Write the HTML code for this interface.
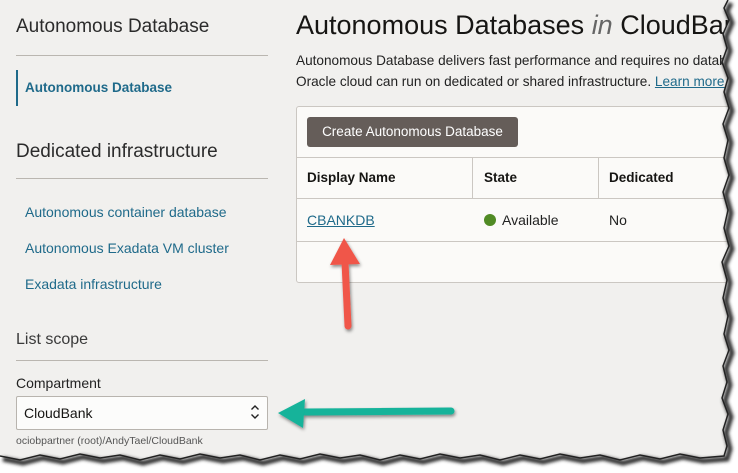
<!DOCTYPE html>
<html><head><meta charset="utf-8"><style>
*{margin:0;padding:0;box-sizing:border-box}
body{width:738px;height:473px;overflow:hidden;background:#fff;font-family:"Liberation Sans",sans-serif;position:relative}
#pg{position:absolute;left:0;top:0;width:738px;height:473px;background:#f1f0ee;overflow:hidden}
.a{position:absolute;white-space:nowrap}
.hr{position:absolute;left:16px;width:252px;height:1px;background:#bab6b0}
.lk{color:#1f6a8a;font-size:14px}
</style></head><body>
<div id="pg">
<div class="a" style="left:16px;top:16px;font-size:19px;color:#2b2b2b;font-weight:300">Autonomous Database</div>
<div class="hr" style="top:55px"></div>
<div class="a" style="left:16px;top:70px;width:2px;height:36px;background:#1f6a8a"></div>
<div class="a" style="left:25px;top:80px;font-size:13.5px;font-weight:bold;color:#1f6a8a">Autonomous Database</div>
<div class="a" style="left:16px;top:141px;font-size:19px;color:#2b2b2b;font-weight:300">Dedicated infrastructure</div>
<div class="hr" style="top:178px"></div>
<div class="a lk" style="left:25px;top:204px">Autonomous container database</div>
<div class="a lk" style="left:25px;top:240px">Autonomous Exadata VM cluster</div>
<div class="a lk" style="left:25px;top:276px">Exadata infrastructure</div>
<div class="a" style="left:16px;top:331px;font-size:16px;color:#3a3a3a">List scope</div>
<div class="hr" style="top:360px"></div>
<div class="a" style="left:16px;top:375px;font-size:14px;color:#222">Compartment</div>
<div class="a" style="left:16px;top:396px;width:252px;height:34px;background:#fcfcfb;border:1px solid #b8b4ae;border-radius:2px"></div>
<div class="a" style="left:24px;top:405px;font-size:14px;color:#161513">CloudBank</div>
<svg class="a" style="left:249px;top:404px" width="12" height="16"><path d="M2.5 5.5L6 2L9.5 5.5M2.5 10.5L6 14L9.5 10.5" fill="none" stroke="#222" stroke-width="1.4"/></svg>
<div class="a" style="left:16px;top:435px;font-size:10.5px;color:#555">ociobpartner (root)/AndyTael/CloudBank</div>

<div class="a" style="left:296px;top:10px;font-size:27px;color:#161513">Autonomous Databases <i style="color:#666">in</i> CloudBank</div>
<div class="a" style="left:296px;top:50px;font-size:13.6px;color:#222;line-height:21px">Autonomous Database delivers fast performance and requires no database administration.<br>Oracle cloud can run on dedicated or shared infrastructure. <span style="color:#1f6a8a;text-decoration:underline">Learn more</span></div>
<div class="a" style="left:296px;top:106px;width:440px;height:177px;background:#fbfaf8;border:1px solid #cbc7c2;border-radius:3px"></div>
<div class="a" style="left:307px;top:117px;width:211px;height:30px;background:#655d59;border-radius:3px;color:#fff;font-size:13.5px;line-height:30px;text-align:center">Create Autonomous Database</div>
<div class="a" style="left:297px;top:157px;width:440px;height:1px;background:#cbc7c2"></div>
<div class="a" style="left:297px;top:198px;width:440px;height:1px;background:#cbc7c2"></div>
<div class="a" style="left:297px;top:241px;width:440px;height:1px;background:#cbc7c2"></div>
<div class="a" style="left:472px;top:158px;width:1px;height:40px;background:#cbc7c2"></div>
<div class="a" style="left:598px;top:158px;width:1px;height:40px;background:#cbc7c2"></div>
<div class="a" style="left:307px;top:170px;font-size:13.5px;font-weight:bold;color:#161513">Display Name</div>
<div class="a" style="left:484px;top:170px;font-size:13.5px;font-weight:bold;color:#161513">State</div>
<div class="a" style="left:609px;top:170px;font-size:13.5px;font-weight:bold;color:#161513">Dedicated</div>
<div class="a" style="left:307px;top:212px;font-size:14px;color:#1f6a8a;text-decoration:underline">CBANKDB</div>
<div class="a" style="left:484px;top:214px;width:12px;height:12px;border-radius:50%;background:#508a24"></div>
<div class="a" style="left:502px;top:212px;font-size:14px;color:#222">Available</div>
<div class="a" style="left:609px;top:212px;font-size:14px;color:#222">No</div>

<svg class="a" style="left:0;top:0" width="738" height="473">
<defs><filter id="s" x="-20%" y="-20%" width="140%" height="140%"><feDropShadow dx="1" dy="2" stdDeviation="1.5" flood-opacity="0.45"/></filter>
<filter id="b"><feGaussianBlur stdDeviation="1.6"/></filter></defs>
<g filter="url(#s)">
<path d="M348 326L345 262" stroke="#f0574a" stroke-width="7" stroke-linecap="round"/>
<path d="M344 238L330 265L360 264Z" fill="#f0574a"/>
<path d="M451 411L305 412" stroke="#12b39a" stroke-width="7" stroke-linecap="round"/>
<path d="M278 413L305 399L303 428Z" fill="#12b39a"/>
</g>
<path d="M728 0L724 8L729 20L723 34L727 48L722 62L728 78L724 92L729 108L723 124L728 140L724 158L729 175L723 192L728 210L724 228L729 246L722 262L727 280L723 298L728 316L724 334L729 350L723 366L727 382L722 398L728 414L723 430L727 446L724 456L700 458L680 454L660 459L640 455L620 460L600 455L580 458L560 454L540 459L520 455L500 460L480 455L460 458L440 454L420 459L400 455L380 460L360 455L340 458L320 454L300 459L280 455L260 460L240 455L220 458L200 454L180 459L160 455L140 460L120 455L100 458L80 454L60 459L40 455L20 460L0 456L0 473L738 473L738 0Z" fill="#fff"/>
<path d="M728 0L724 8L729 20L723 34L727 48L722 62L728 78L724 92L729 108L723 124L728 140L724 158L729 175L723 192L728 210L724 228L729 246L722 262L727 280L723 298L728 316L724 334L729 350L723 366L727 382L722 398L728 414L723 430L727 446L724 456L700 458L680 454L660 459L640 455L620 460L600 455L580 458L560 454L540 459L520 455L500 460L480 455L460 458L440 454L420 459L400 455L380 460L360 455L340 458L320 454L300 459L280 455L260 460L240 455L220 458L200 454L180 459L160 455L140 460L120 455L100 458L80 454L60 459L40 455L20 460L0 456" fill="none" stroke="#333" stroke-width="5" filter="url(#b)" transform="translate(3,3)"/>
<path d="M728 0L724 8L729 20L723 34L727 48L722 62L728 78L724 92L729 108L723 124L728 140L724 158L729 175L723 192L728 210L724 228L729 246L722 262L727 280L723 298L728 316L724 334L729 350L723 366L727 382L722 398L728 414L723 430L727 446L724 456L700 458L680 454L660 459L640 455L620 460L600 455L580 458L560 454L540 459L520 455L500 460L480 455L460 458L440 454L420 459L400 455L380 460L360 455L340 458L320 454L300 459L280 455L260 460L240 455L220 458L200 454L180 459L160 455L140 460L120 455L100 458L80 454L60 459L40 455L20 460L0 456" fill="none" stroke="#222" stroke-width="1.5"/>
</svg>
</div>
</body></html>
